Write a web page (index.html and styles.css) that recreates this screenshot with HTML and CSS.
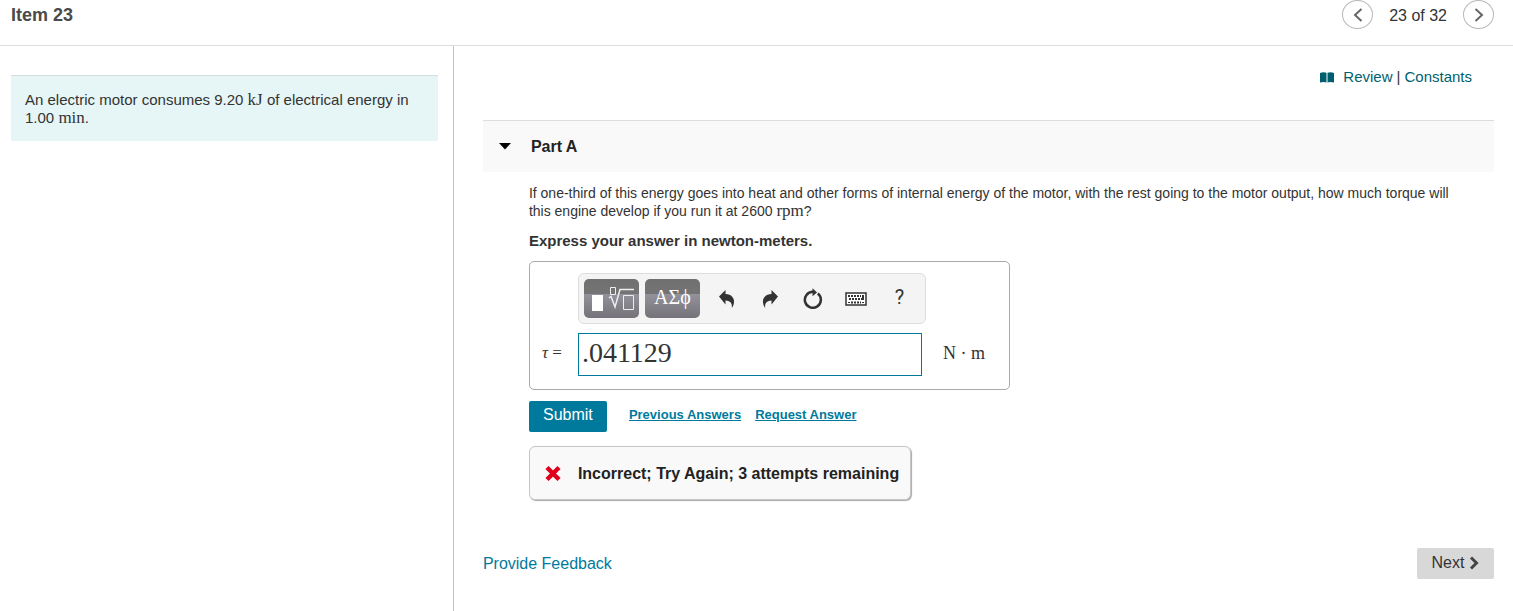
FILE: index.html
```html
<!DOCTYPE html>
<html lang="en">
<head>
<meta charset="utf-8">
<title>Item 23</title>
<link rel="stylesheet" href="styles.css">
</head>
<body>
<header class="topbar">
  <h1 class="item-title">Item 23</h1>
  <nav class="pager" aria-label="Items">
    <button class="round" type="button" aria-label="Previous item"><svg width="10" height="14" viewBox="0 0 10 14"><path d="M8.500 1 2 7l6.500 6" /></svg></button>
    <span class="count">23 of 32</span>
    <button class="round" type="button" aria-label="Next item"><svg width="10" height="14" viewBox="0 0 10 14"><path d="m1.500 1 6.500 6-6.500 6" /></svg></button>
  </nav>
</header>
<div class="columns">
  <aside class="side">
    <p class="problem">An electric motor consumes 9.20 <span class="unit">kJ</span> of electrical energy in 1.00 <span class="unit">min</span>.</p>
  </aside>
  <main class="main">
    <div class="resources">
      <svg class="book" width="14" height="11" viewBox="0 0 14 11"><path d="M0 1Q3.500-.5 6.500.8V10.500Q4 9.500 0 10.500ZM7.500.8Q10.500-.5 14 1V10.500Q10 9.500 7.500 10.500Z"/></svg>
      <a href="#review">Review</a><span class="bar">|</span><a href="#constants">Constants</a>
    </div>
    <h2 class="part"><svg width="12" height="7" viewBox="0 0 12 7"><path d="M0 0h12L6 6.500Z"/></svg>Part A</h2>
    <section class="body">
      <p class="question">If one-third of this energy goes into heat and other forms of internal energy of the motor, with the rest going to the motor output, how much torque will<br> this engine develop if you run it at 2600 <span class="unit">rpm</span>?</p>
      <p class="instruction">Express your answer in newton-meters.</p>
      <form class="answer">
        <div class="toolbar">
          <button class="dark" type="button" aria-label="Templates"><svg width="55" height="38" viewBox="0 0 55 38"><path class="solid" d="M8 15h11v16H8z"/><path class="thin" d="M26.500 7.500h5v7h-5zM39.500 15.500h10v14h-10z"/><path class="root" d="m25 18 2-1.500 4 10.500 5-17.500H50"/></svg></button>
          <button class="dark greek" type="button">ΑΣϕ</button>
          <button class="tool" type="button" aria-label="Undo"><svg width="18" height="20" viewBox="0 0 18 20"><path class="fill" d="M1 7.500 7.500 1v4c6 .2 9 4 8.500 8.500-.2 2-1 4-2.200 5.500.6-4-.8-7.300-6.300-7.500v4Z"/></svg></button>
          <button class="tool" type="button" aria-label="Redo"><svg width="18" height="20" viewBox="0 0 18 20"><path class="fill" d="M17 7.500 10.500 1v4c-6 .2-9 4-8.500 8.500.2 2 1 4 2.200 5.500-.6-4 .8-7.300 6.300-7.500v4Z"/></svg></button>
          <button class="tool" type="button" aria-label="Reset"><svg width="20" height="22" viewBox="0 0 20 22"><path class="ring" d="M14.800 5.500a8 8 0 1 1-4.800-1.700"/><path class="fill" d="M9.500.2 14 4.500 9.500 8.200Z"/></svg></button>
          <button class="tool key" type="button" aria-label="Keyboard shortcuts"><svg width="22" height="14" viewBox="0 0 22 14"><path class="case" d="M1 1h20v12H1z"/><path class="keys" d="M3 4h13M4 7h12M6 10.500h10"/><path class="fill" d="M17 3h2v5h-3V6h1zM3 10h2v1H3zM17 10h2v1h-2z"/></svg></button>
          <button class="tool help" type="button" aria-label="Help">?</button>
        </div>
        <label class="symbol" for="torque"><i>τ</i> =</label>
        <input class="value" id="torque" type="text" value=".041129">
        <span class="measure">N · m</span>
      </form>
      <div class="actions">
        <button class="submit" type="button">Submit</button>
        <a href="#previous">Previous Answers</a>
        <a href="#request">Request Answer</a>
      </div>
      <div class="feedback" role="status"><svg width="16" height="18" viewBox="0 0 16 18"><path d="m2 2.500 12 12m0-12-12 12"/></svg>Incorrect; Try Again; 3 attempts remaining</div>
    </section>
    <footer class="foot">
      <a href="#feedback">Provide Feedback</a>
      <button class="next" type="button">Next <svg width="10" height="14" viewBox="0 0 10 14"><path d="m2 1.500 5.500 5.500L2 12.500"/></svg></button>
    </footer>
  </main>
</div>
</body>
</html>
```
FILE: styles.css
```css
* { box-sizing: border-box; }
body {
  margin: 0;
  min-height: 100vh;
  display: flex;
  flex-direction: column;
  background: #fff;
  color: #333;
  font: 15px/18px "Liberation Sans", Arial, sans-serif;
}
h1, h2, p { margin: 0; }
button { font: inherit; color: inherit; border: 0; padding: 0; cursor: pointer; }
a { color: #005f6f; text-decoration: none; }
svg { display: block; flex: none; }

.topbar {
  display: flex;
  justify-content: space-between;
  height: 46px;
  padding: 0 19px 0 11px;
  border-bottom: 1px solid #ddd;
}
.item-title { font-size: 18px; line-height: 30px; color: #4a4a4a; }
.pager { display: flex; align-items: flex-start; gap: 16px; }
.round {
  width: 31px;
  height: 29px;
  display: grid;
  place-items: center;
  background: #fff;
  border: 1px solid #b8b8b8;
  border-radius: 50%;
}
.round path { fill: none; stroke: #666; stroke-width: 2; }
.count { font-size: 16px; line-height: 32px; }

.columns { flex: 1; display: flex; }
.side {
  width: 30%;
  padding: 29px 15px 0 11px;
  border-right: 1px solid #b9c6d8;
}
.problem {
  padding: 15px 14px 14px;
  background: #e6f6f6;
  border-top: 1px solid #d5dddd;
}
.unit { font-family: "Liberation Serif", "Times New Roman", serif; font-size: 17px; line-height: 0; }

.main { flex: 1; padding: 22px 19px 20px 29px; }
.resources { display: flex; align-items: center; justify-content: flex-end; padding-right: 22px; }
.book { margin-right: 9px; fill: #005f6f; }
.bar { padding: 0 4px; }
.part {
  display: flex;
  align-items: center;
  gap: 20px;
  height: 52px;
  margin-top: 34px;
  padding-left: 16px;
  background: #f9f9f9;
  border-top: 1px solid #ddd;
  font-size: 16px;
  color: #222;
}
.body { padding: 12px 0 0 46px; }
.question { font-size: 14px; }
.instruction { margin-top: 12px; font-weight: bold; }

.answer {
  width: 481px;
  max-width: 100%;
  display: grid;
  grid-template-columns: 36px 344px 1fr;
  align-items: center;
  gap: 9px 0;
  margin-top: 11px;
  padding: 11px 12px 13px;
  border: 1px solid #aaa;
  border-radius: 5px;
}
.toolbar {
  grid-column: 2 / 4;
  justify-self: start;
  display: flex;
  align-items: center;
  width: 348px;
  height: 51px;
  padding-left: 5px;
  background: #f4f4f4;
  border: 1px solid #ddd;
  border-radius: 6px;
}
.dark {
  width: 55px;
  height: 39px;
  margin-right: 6px;
  color: #fff;
  background: linear-gradient(#707070, #747474 38%, #93919a 39%, #757379);
  border-radius: 5px;
}
.greek { padding-bottom: 3px; font-family: "Liberation Serif", "Times New Roman", serif; font-size: 20px; }
.solid { fill: #fff; }
.thin { fill: none; stroke: #eee; }
.root { fill: none; stroke: #eee; stroke-width: 1.500; }
.tool { width: 43px; height: 39px; display: grid; place-items: center; background: none; }
.fill { fill: #333; }
.ring { fill: none; stroke: #333; stroke-width: 2.500; }
.case { fill: #fff; stroke: #333; stroke-width: 1.500; }
.keys { stroke: #333; stroke-width: 2; stroke-dasharray: 2 1; }
.help { padding-bottom: 3px; font-family: Roboto, sans-serif; font-size: 20px; }
.symbol { padding-bottom: 3px; font-family: "Liberation Serif", "Times New Roman", serif; font-size: 17px; }
.value {
  width: 344px;
  height: 43px;
  padding: 0 3px 3px;
  border: 1px solid #007a9c;
  background: #fff;
  color: #333;
  font: 28px "Liberation Serif", "Times New Roman", serif;
}
.measure { padding: 0 0 4px 21px; font-family: "Liberation Serif", "Times New Roman", serif; font-size: 18px; }

.actions { display: flex; align-items: center; margin-top: 11px; }
.actions a {
  margin-right: 14px;
  padding-bottom: 3px;
  color: #007a9c;
  font-size: 13px;
  font-weight: bold;
  text-decoration: underline;
}
.submit {
  width: 78px;
  height: 31px;
  margin-right: 22px;
  padding-bottom: 3px;
  background: #007a9c;
  border-radius: 2px;
  color: #fff;
  font-size: 16px;
}
.feedback {
  width: fit-content;
  display: flex;
  align-items: center;
  gap: 17px;
  height: 54px;
  margin-top: 14px;
  padding: 2px 11px 0 15px;
  background: #f9f9f9;
  border: 1px solid #c5c5c5;
  border-radius: 6px;
  box-shadow: 1px 1px 1px #aaa;
  color: #222;
  font-size: 16px;
  font-weight: bold;
}
.feedback path { stroke: #e0001b; stroke-width: 4.500; }
.foot {
  display: flex;
  align-items: center;
  justify-content: space-between;
  margin-top: 48px;
  font-size: 16px;
}
.foot a { color: #007a9c; }
.next {
  display: flex;
  align-items: center;
  justify-content: center;
  gap: 5px;
  width: 77px;
  height: 31px;
  padding-bottom: 2px;
  background: #d8d8d8;
  border-radius: 2px;
}
.next path { fill: none; stroke: #444; stroke-width: 3; }
```
